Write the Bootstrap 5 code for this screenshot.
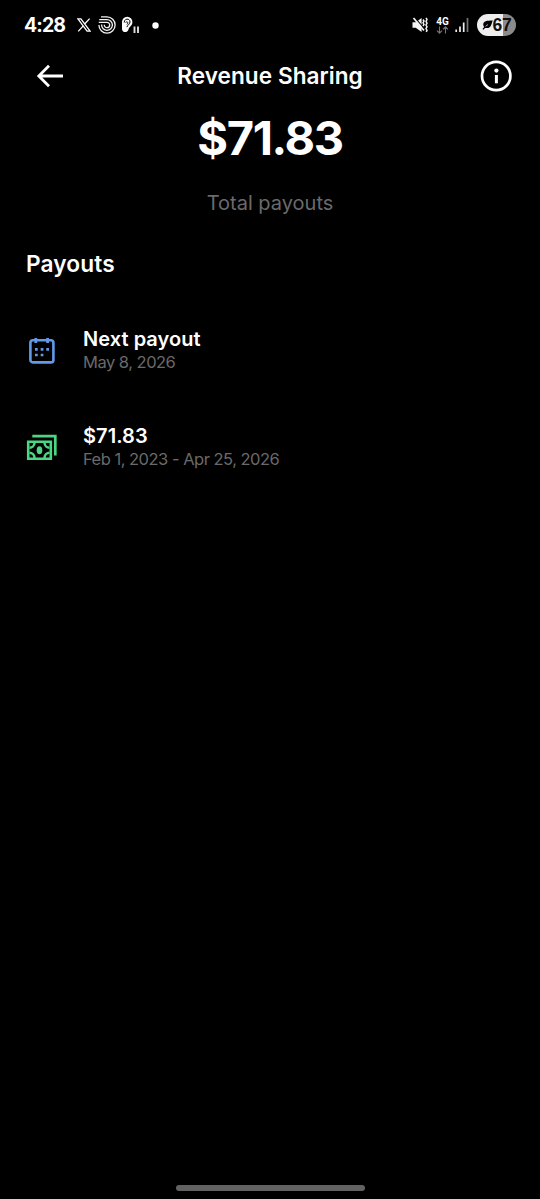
<!DOCTYPE html>
<html lang="en" data-bs-theme="dark">
<head>
<meta charset="utf-8">
<meta name="viewport" content="width=device-width, initial-scale=1">
<title>Revenue Sharing</title>
<link href="https://cdn.jsdelivr.net/npm/bootstrap@5.3.0/dist/css/bootstrap.min.css" rel="stylesheet">
<style>
body{background:#000;color:#fff;font-family:Inter,"Noto Sans",sans-serif;height:1199px;overflow:hidden}
svg{display:block;flex:none}
.status{height:50px;padding:0 24px}
.clock{font-size:19.5px;font-weight:700;line-height:24px;width:53px;letter-spacing:-.9px}
.net{width:17px;margin-left:6px}
.net b{display:block;font:700 10px/9px Roboto,sans-serif;text-align:center}
.battery{width:39px;height:22px;border-radius:11px;background:linear-gradient(90deg,#eee 67%,#8b8b8b 67%);color:#111;font:700 17.5px/22px "Liberation Sans",sans-serif;letter-spacing:-.3px;margin-left:8px}
.topbar{height:52px;padding:0 28px 0 35px}
.topbar h1{font-size:22.6px;font-weight:600;line-height:30px;letter-spacing:.05px}
.total{font-size:47px;font-weight:700;line-height:56px;margin-top:8px;letter-spacing:-1.4px}
.dim{color:#6a6a6a}
.caption-text{font-size:20px;line-height:26px;margin-top:24px}
.section-title{font-size:22.7px;font-weight:600;line-height:30px;margin:33px 0 0 26px;letter-spacing:.1px}
.entry{height:97px;padding-left:26px}
.entry-text{margin-left:25px}
.entry-title{font-size:20px;font-weight:600;line-height:25px;letter-spacing:.05px}
.entry-date{font-size:16.5px;line-height:20px;margin-bottom:2px;letter-spacing:-.5px}
.homebar{width:189px;height:6px;border-radius:3px;background:#626262;margin-bottom:8px}
</style>
</head>
<body class="d-flex flex-column">
<div class="status d-flex align-items-center flex-shrink-0">
  <div class="clock">4:28</div>
  <svg width="14" height="14" viewBox="0 0 14 14" fill="none" stroke="#fff"><path d="M.9.8h3l9.2 12.4h-3zM12.6.6 7.9 5.8M6 8.1 1.2 13.4" stroke-width="1.3"/></svg>
  <svg style="margin-left:7px" width="18" height="18" viewBox="0 0 18 18" fill="none" stroke="#f2f2f2" stroke-width="1.3"><path d="M3 .9h6A8.1 8.1 0 1 1 .9 9"/><path d="M1.2 3.6H9A5.4 5.4 0 1 1 3.6 9V8.5"/><path d="M.8 6.3H9A2.7 2.7 0 1 1 6.3 9V8.7"/></svg>
  <svg style="margin-left:5px" width="19" height="18" viewBox="0 0 19 18"><path d="M1 6a5.2 5.2 0 0 1 10.4 0c0 4-3 4.1-4 7.7C6.5 17 1 17 1 13z" fill="#fff"/><path d="M3.2 6.5C3.3 2 9 2.1 9 6c0 2.3-2.4 2.7-3.1 5.1M4.6 6.4c2-1.6 3 .6 1.4 2.1" stroke="#000" stroke-width="1" fill="none"/><path d="M13.5 10.5v6.5M17 10.5v6.5" stroke="#ddd" stroke-width="1.9"/></svg>
  <svg width="7" height="7" style="margin-left:12px"><circle cx="3.5" cy="3.5" r="3.2" fill="#fff"/></svg>
  <div class="ms-auto"></div>
  <svg width="16" height="16" viewBox="0 0 16 16"><path d="M.5 5.2h3.2L9.6 1v14l-5.9-4.2H.5z" fill="#f4f4f4"/><path d="M3 .8 11.5 10.6" stroke="#000" stroke-width="1.2"/><path d="M1.5 1 12 13.5" stroke="#f4f4f4" stroke-width="1.7"/><path d="m11 2.5 1 1.6-1 1.7 1 1.6-1 1.6M14 .8l1 1.8-1 1.8 1 1.8-1 1.8 1 1.8-1 1.8 1 1.8-.8 1.4" fill="none" stroke="#f4f4f4" stroke-width="1.5"/></svg>
  <div class="net"><b>4G</b><svg class="mx-auto" width="13" height="8" viewBox="0 0 13 8" fill="none" stroke="#777" stroke-width="1.1"><path d="M3.5.5v6.7M1 4.7l2.5 2.5L6 4.7M9.5 7.5V.8M7 3.3 9.5.8 12 3.3"/></svg></div>
  <svg style="margin-left:4px" width="14" height="15" viewBox="0 0 14 15"><path d="M1.2 11.5v2.5M5 8.5V14M8.7 4.5V14" stroke="#eee" stroke-width="1.7"/><path d="M12.5 0v14" stroke="#777" stroke-width="1.7"/></svg>
  <div class="battery d-flex align-items-center justify-content-center me-n3"><svg width="11" height="10" viewBox="0 0 12 11"><path d="M11.8.5C5 .5 1.5 1 1.3 5c0 1 .4 1.9 1 2.6L.5 10l1 .7 1.8-2C10 10 10 5 11.8.5z" fill="#000"/><path d="m3.8 7 2.8-2" stroke="#eee" stroke-width=".8"/></svg><span>67</span></div>
</div>
<header class="topbar d-flex align-items-center justify-content-between flex-shrink-0">
  <svg style="margin-right:-5px" width="30" height="24" viewBox="0 0 30 24" fill="none" stroke="#fff" stroke-width="2.8"><path d="M28 12H4M14 1.8 3.8 12 14 22.2"/></svg>
  <h1 class="m-0">Revenue Sharing</h1>
  <svg width="32" height="32" viewBox="0 0 32 32"><circle cx="16.2" cy="16" r="14.2" fill="none" stroke="#fff" stroke-width="2.7"/><circle cx="16.4" cy="10.6" r="2.1" fill="#fff"/><path d="M16.4 15v8.3" stroke="#fff" stroke-width="3"/></svg>
</header>
<main class="flex-grow-1">
  <div class="total text-center">$71.83</div>
  <div class="caption-text dim text-center">Total payouts</div>
  <h2 class="section-title">Payouts</h2>
  <div class="entry d-flex align-items-center" style="margin-top:23px">
    <svg width="32" height="32" viewBox="0 0 32 32"><rect x="4.4" y="5.2" width="23" height="22.2" rx="2.5" fill="none" stroke="#6299e8" stroke-width="2.6"/><path d="M9.8 3v5M21.6 3v5" stroke="#6299e8" stroke-width="2.8"/><path d="M9 14.3h2.7M14.7 14.3h2.7M20.3 14.3H23M9 20h2.7M14.7 20h2.7" stroke="#6299e8" stroke-width="2.7"/></svg>
    <div class="entry-text"><div class="entry-title">Next payout</div><div class="entry-date dim">May 8, 2026</div></div>
  </div>
  <div class="entry d-flex align-items-center">
    <svg width="32" height="32" viewBox="0 0 32 32" fill="none" stroke="#4bd782"><path d="M6.3 4.2h23v19.3" stroke-width="2.7"/><path d="M2.2 9.7h22.6v17.1H2.2z" stroke-width="2.6"/><path d="M8.5 10v1a5 5 0 0 1-5 4.7M18.5 10v1a5 5 0 0 0 5 4.7M8.5 26.5v-1a5 5 0 0 0-5-4.7M18.5 26.5v-1a5 5 0 0 1 5-4.7" stroke-width="2.5"/><ellipse cx="13.5" cy="18.2" rx="2.8" ry="4" fill="#4bd782" stroke="none"/></svg>
    <div class="entry-text"><div class="entry-title">$71.83</div><div class="entry-date dim">Feb 1, 2023 - Apr 25, 2026</div></div>
  </div>
</main>
<div class="homebar mx-auto flex-shrink-0"></div>
<script src="https://cdn.jsdelivr.net/npm/bootstrap@5.3.0/dist/js/bootstrap.bundle.min.js"></script>
</body>
</html>
